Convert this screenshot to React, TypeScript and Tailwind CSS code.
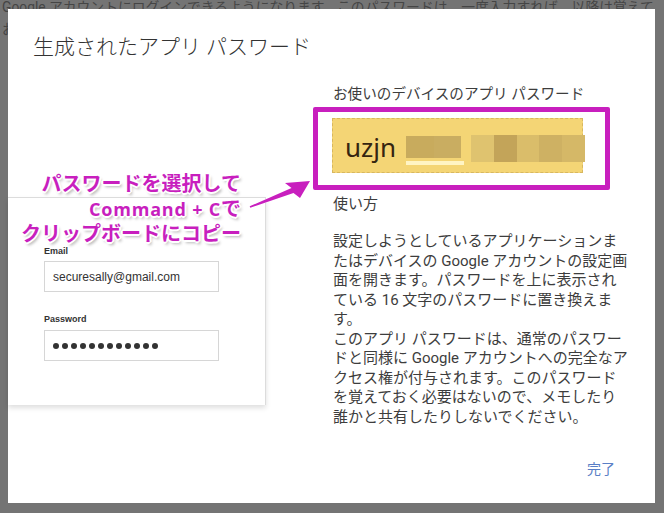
const JP = "font-['Roboto','Noto_Sans_CJK_JP',sans-serif]";

const HOWTO = [
  '設定しようとしているアプリケーションま',
  'たはデバイスの Google アカウントの設定画',
  '面を開きます。パスワードを上に表示され',
  'ている 16 文字のパスワードに置き換えま',
  'す。',
  'このアプリ パスワードは、通常のパスワー',
  'ドと同様に Google アカウントへの完全なア',
  'クセス権が付与されます。このパスワード',
  'を覚えておく必要はないので、メモしたり',
  '誰かと共有したりしないでください。',
];

/** Pixelated (blurred out) part of the password. */
const BLUR_A = ['#c8ab5d', '#c9ad61'];
const BLUR_B = ['#dfc36f', '#c3a459', '#dabd6a', '#ceb163', '#d5b867'];

const OUTLINE =
  '[text-shadow:1px_1px_0_#fff,-1px_-1px_0_#fff,1px_-1px_0_#fff,-1px_1px_0_#fff,0_2px_0_#fff,2px_0_0_#fff,0_-2px_0_#fff,-2px_0_0_#fff,2px_3px_3px_rgba(0,0,0,0.3)]';

function LoginCard() {
  return (
    <div className="mt-[113px] h-[208px] w-[258px] border-r border-t border-[#dcdcdc] bg-white pl-[36px] pt-[47px] font-['Liberation_Sans',Arial,sans-serif] text-[#333] shadow-[0_3px_5px_rgba(0,0,0,0.13)]">
      <div className="text-[9px] font-bold leading-[12px]">Email</div>
      <div className="mt-[4px] flex h-[31px] w-[175px] items-center border border-[#d6d6d6] pl-[8px] text-[12px]">
        securesally@gmail.com
      </div>
      <div className="mt-[21px] text-[9px] font-bold leading-[12px]">Password</div>
      <div className="mt-[5px] flex h-[31px] w-[175px] items-center gap-[3px] border border-[#d6d6d6] pl-[8px]">
        {Array.from({ length: 12 }).map((_, i) => (
          <span key={i} className="size-[6px] rounded-full bg-[#333]" />
        ))}
      </div>
    </div>
  );
}

function Arrow() {
  return (
    <svg
      className="absolute left-[236px] top-[92px]"
      width="76"
      height="40"
      viewBox="0 0 76 40"
      aria-hidden="true"
    >
      <polygon
        points="5.7,30.3 47.5,11.9 41,7 66,5 56,22 49.5,17.1 6.3,31.7"
        fill="#c81fbe"
        stroke="#ffffff"
        strokeWidth="1"
        strokeLinejoin="round"
        paintOrder="stroke"
      />
    </svg>
  );
}

export default function App() {
  return (
    <div className={`relative h-[513px] w-[664px] overflow-hidden bg-[#747474] ${JP}`}>
      {/* page behind the modal */}
      <div className="-mt-[4px] whitespace-nowrap pl-[2px] text-[13.8px] leading-[22px] text-[#454545]">
        <div>Google アカウントにログインできるようになります。このパスワードは、一度入力すれば、以降は覚えて</div>
        <div>おく必要はありません。</div>
      </div>

      {/* modal */}
      <div className="absolute left-[8px] top-[9px] flex h-[494px] w-[647px] flex-col bg-white">
        <h1 className="pl-[25px] pt-[24px] text-[21px] font-light leading-[28px] text-[#333]">
          生成されたアプリ パスワード
        </h1>

        <div className="mt-[23px] flex">
          <div className="relative w-[325px] shrink-0">
            <LoginCard />
            <div
              className={`absolute right-[92px] top-[88px] whitespace-nowrap text-right font-bold leading-[25px] text-[#c81fbe] ${OUTLINE}`}
            >
              <div className="text-[20px]">パスワードを選択して</div>
              <div className="text-[20px]">
                <span className="font-['Open_Sans',sans-serif] text-[18px] tracking-[0.8px]">Command + C</span>で
              </div>
              <div className="text-[20px]">クリップボードにコピー</div>
            </div>
            <Arrow />
          </div>

          <div className="relative w-[300px] whitespace-nowrap text-[#3d3d3d]">
            <div className="text-[14.6px] leading-[20px]">お使いのデバイスのアプリ パスワード</div>
            <div className="ml-[-1px] mt-[14px] flex h-[55px] w-[251px] items-center border border-dashed border-[#d8b75f] bg-[#f4d575] pl-[12px]">
              <span className="pt-[2px] font-['Noto_Sans',sans-serif] text-[26px] leading-none text-[#352510]">
                uzjn
              </span>
              <span className="ml-[10px] flex flex-col self-start pt-[17px]">
                <span className="flex h-[22px]">
                  {BLUR_A.map((c, i) => (
                    <span key={i} className="w-[27.5px]" style={{ background: c }} />
                  ))}
                </span>
                <span className="mt-[3px] h-[4px] w-[58px] bg-[#fff4c4]" />
              </span>
              <span className="ml-[7px] mt-[16px] flex h-[27px] self-start">
                {BLUR_B.map((c, i) => (
                  <span key={i} className="w-[22.8px]" style={{ background: c }} />
                ))}
              </span>
            </div>
            <div className="mt-[21px] text-[15px] leading-[20px]">使い方</div>
            <div className="mt-[18px] text-[15px] leading-[19.5px]">
              {HOWTO.map((l) => (
                <div key={l}>{l}</div>
              ))}
            </div>

            {/* annotation frame */}
            <div className="absolute left-[-20px] top-[23px] h-[83px] w-[297px] rounded-[2px] border-[5px] border-[#c81fbe]" />
          </div>
        </div>

        <div className="mt-auto flex justify-end pb-[24px] pr-[40px]">
          <button type="button" className="text-[14px] leading-[20px] text-[#5a7fc6]">
            完了
          </button>
        </div>
      </div>
    </div>
  );
}
